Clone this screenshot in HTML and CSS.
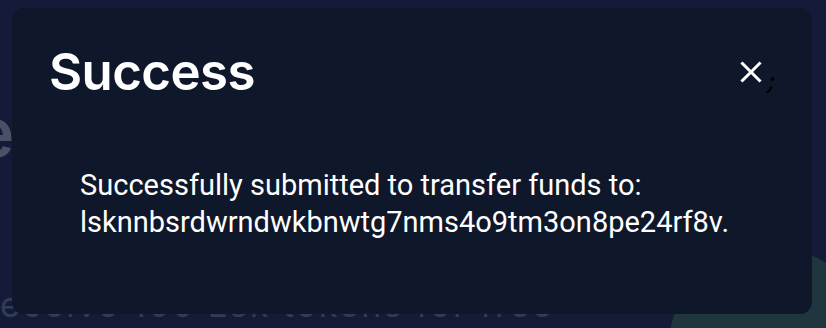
FILE: index.html
```html
<!DOCTYPE html>
<html lang="en">
<head>
<meta charset="utf-8">
<title>Success</title>
<link rel="stylesheet" href="styles.css">
</head>
<body>
<div class="backdrop">
  <div class="bg-heading">e</div>
  <div class="bg-sub">eceive 100 Lsk tokens for free</div>
  <div class="bg-blob"></div>
</div>
<div class="modal">
  <div class="modal-header">
    <h1 class="modal-title">Success</h1>
    <div class="close-wrap">
      <button class="close-btn" aria-label="Close">
        <svg width="22" height="22" viewBox="0 0 22 22"><path d="M2.5 2.5 L19.5 19.5 M19.5 2.5 L2.5 19.5" stroke="#fff" stroke-width="3" stroke-linecap="square" fill="none"/></svg>
      </button>
      <span class="stray">;</span>
    </div>
  </div>
  <div class="modal-body">
    <p>Successfully submitted to transfer funds to:<br>lsknnbsrdwrndwkbnwtg7nms4o9tm3on8pe24rf8v.</p>
  </div>
</div>
</body>
</html>
```
FILE: styles.css
```css
html, body {
  margin: 0;
  padding: 0;
}
body {
  width: 826px;
  height: 328px;
  background: #131b38;
  overflow: hidden;
  position: relative;
  font-family: "Roboto", "Liberation Sans", sans-serif;
}
.backdrop {
  position: absolute;
  inset: 0;
  overflow: hidden;
}
.bg-heading {
  position: absolute;
  left: -26px;
  top: 91px;
  font-family: "Inter", "Liberation Sans", sans-serif;
  font-size: 68px;
  font-weight: 600;
  color: #4a5066;
}
.bg-sub {
  position: absolute;
  left: 0;
  top: 284px;
  font-family: "Inter", "Liberation Sans", sans-serif;
  font-size: 34px;
  letter-spacing: 2.4px;
  color: #343b54;
  white-space: nowrap;
}
.bg-blob {
  position: absolute;
  left: 668px;
  top: 247px;
  width: 206px;
  height: 206px;
  border-radius: 50%;
  background: #1f363f;
}
.modal {
  position: relative;
  margin: 8px 0 0 12px;
  width: 800px;
  height: 306px;
  background: #0f172a;
  border-radius: 12px;
  box-sizing: border-box;
  display: flex;
  flex-direction: column;
}
.modal-header {
  display: flex;
  justify-content: space-between;
  align-items: flex-start;
  padding: 36px 36px 0 37px;
}
.modal-title {
  margin: 0;
  font-family: "Inter", "Liberation Sans", sans-serif;
  font-size: 51px;
  font-weight: 600;
  line-height: 56px;
  color: #fff;
  letter-spacing: -0.6px;
}
.close-wrap {
  display: flex;
  align-items: flex-start;
  gap: 5px;
  padding-top: 17px;
}
.close-btn {
  background: none;
  border: 0;
  padding: 0;
  width: 22px;
  height: 22px;
  display: block;
}
.close-btn svg {
  display: block;
}
.stray {
  font-family: "DejaVu Serif", serif;
  font-style: italic;
  font-size: 28px;
  color: #000;
  line-height: 28px;
  margin-top: 6px;
}
.modal-body {
  padding: 67px 40px 0 68px;
}
.modal-body p {
  margin: 0;
  font-size: 29px;
  line-height: 37px;
  color: #fff;
}
```
